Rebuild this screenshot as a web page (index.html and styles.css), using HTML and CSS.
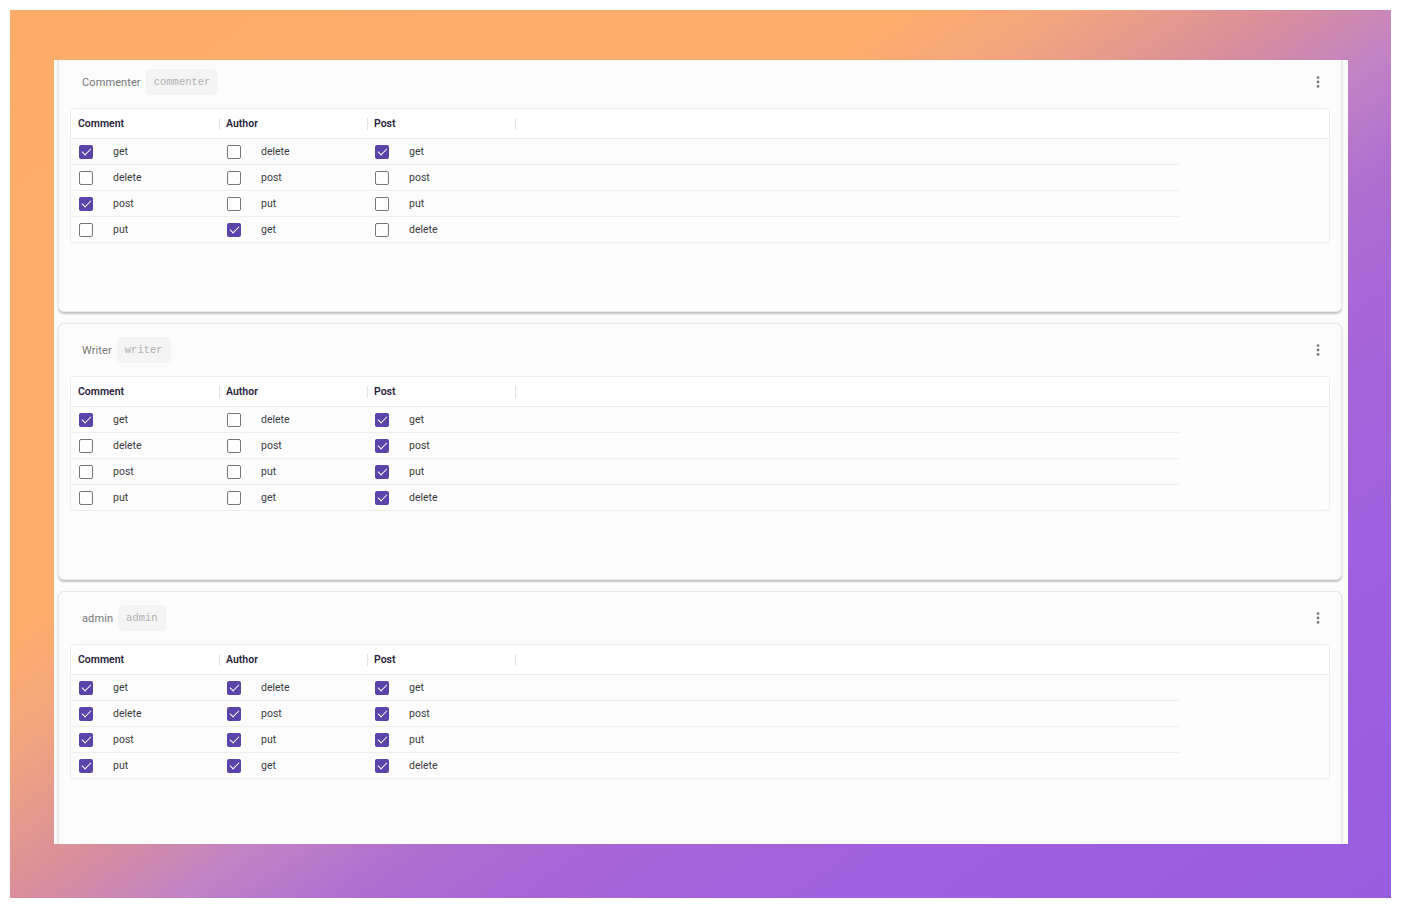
FILE: index.html
```html
<!DOCTYPE html>
<html lang="en">
<head>
<meta charset="utf-8">
<title>Roles</title>
<link rel="stylesheet" href="styles.css">
</head>
<body>
<div class="frame">
  <div class="window">
    <div class="list">

      <section class="card">
        <header class="card-head">
          <span class="role-name">Commenter</span>
          <code class="role-key">commenter</code>
          <button class="more" aria-label="More"><svg width="4" height="12" viewBox="0 0 4 12"><circle cx="2" cy="1.6" r="1.4"/><circle cx="2" cy="6" r="1.4"/><circle cx="2" cy="10.4" r="1.4"/></svg></button>
        </header>
        <div class="perm-table">
          <div class="perm-head"><div class="th">Comment</div><div class="th">Author</div><div class="th">Post</div></div>
          <div class="perm-row">
            <label class="cell"><span class="cb on"></span>get</label>
            <label class="cell"><span class="cb"></span>delete</label>
            <label class="cell"><span class="cb on"></span>get</label>
          </div>
          <div class="perm-row">
            <label class="cell"><span class="cb"></span>delete</label>
            <label class="cell"><span class="cb"></span>post</label>
            <label class="cell"><span class="cb"></span>post</label>
          </div>
          <div class="perm-row">
            <label class="cell"><span class="cb on"></span>post</label>
            <label class="cell"><span class="cb"></span>put</label>
            <label class="cell"><span class="cb"></span>put</label>
          </div>
          <div class="perm-row">
            <label class="cell"><span class="cb"></span>put</label>
            <label class="cell"><span class="cb on"></span>get</label>
            <label class="cell"><span class="cb"></span>delete</label>
          </div>
        </div>
      </section>

      <section class="card">
        <header class="card-head">
          <span class="role-name">Writer</span>
          <code class="role-key">writer</code>
          <button class="more" aria-label="More"><svg width="4" height="12" viewBox="0 0 4 12"><circle cx="2" cy="1.6" r="1.4"/><circle cx="2" cy="6" r="1.4"/><circle cx="2" cy="10.4" r="1.4"/></svg></button>
        </header>
        <div class="perm-table">
          <div class="perm-head"><div class="th">Comment</div><div class="th">Author</div><div class="th">Post</div></div>
          <div class="perm-row">
            <label class="cell"><span class="cb on"></span>get</label>
            <label class="cell"><span class="cb"></span>delete</label>
            <label class="cell"><span class="cb on"></span>get</label>
          </div>
          <div class="perm-row">
            <label class="cell"><span class="cb"></span>delete</label>
            <label class="cell"><span class="cb"></span>post</label>
            <label class="cell"><span class="cb on"></span>post</label>
          </div>
          <div class="perm-row">
            <label class="cell"><span class="cb"></span>post</label>
            <label class="cell"><span class="cb"></span>put</label>
            <label class="cell"><span class="cb on"></span>put</label>
          </div>
          <div class="perm-row">
            <label class="cell"><span class="cb"></span>put</label>
            <label class="cell"><span class="cb"></span>get</label>
            <label class="cell"><span class="cb on"></span>delete</label>
          </div>
        </div>
      </section>

      <section class="card">
        <header class="card-head">
          <span class="role-name">admin</span>
          <code class="role-key">admin</code>
          <button class="more" aria-label="More"><svg width="4" height="12" viewBox="0 0 4 12"><circle cx="2" cy="1.6" r="1.4"/><circle cx="2" cy="6" r="1.4"/><circle cx="2" cy="10.4" r="1.4"/></svg></button>
        </header>
        <div class="perm-table">
          <div class="perm-head"><div class="th">Comment</div><div class="th">Author</div><div class="th">Post</div></div>
          <div class="perm-row">
            <label class="cell"><span class="cb on"></span>get</label>
            <label class="cell"><span class="cb on"></span>delete</label>
            <label class="cell"><span class="cb on"></span>get</label>
          </div>
          <div class="perm-row">
            <label class="cell"><span class="cb on"></span>delete</label>
            <label class="cell"><span class="cb on"></span>post</label>
            <label class="cell"><span class="cb on"></span>post</label>
          </div>
          <div class="perm-row">
            <label class="cell"><span class="cb on"></span>post</label>
            <label class="cell"><span class="cb on"></span>put</label>
            <label class="cell"><span class="cb on"></span>put</label>
          </div>
          <div class="perm-row">
            <label class="cell"><span class="cb on"></span>put</label>
            <label class="cell"><span class="cb on"></span>get</label>
            <label class="cell"><span class="cb on"></span>delete</label>
          </div>
        </div>
      </section>

    </div>
  </div>
</div>
</body>
</html>
```

FILE: styles.css
```css
* { box-sizing: border-box; }

html, body {
  margin: 0;
  padding: 0;
  background: #ffffff;
}

body {
  padding: 10px;
  width: 1401px;
  height: 918px;
  font-family: Roboto, Inter, "Noto Sans", sans-serif;
}

.frame {
  width: 1381px;
  height: 888px;
  padding: 50px 43px 54px 44px;
  background: linear-gradient(145deg, #fdab69 0%, #fdac6c 34%, #f3a47f 40%, #d98e9a 48%, #c383c4 54%, #b070d0 60%, #a865d8 67%, #9e60e0 82%, #985ce0 100%);
}

.window {
  width: 1294px;
  height: 784px;
  background: #fcfcfc;
  overflow: hidden;
  padding: 0 6px 0 4px;
}

.list {
  margin-top: -5px;
  display: flex;
  flex-direction: column;
  gap: 11px;
}

.card {
  background: #fcfcfc;
  border: 1px solid #e9e9e9;
  border-radius: 6px;
  box-shadow: 0 1.5px 2px rgba(0, 0, 0, 0.22);
  padding: 0 11px 68px 11px;
}

.card-head {
  height: 52px;
  display: flex;
  align-items: center;
  padding: 0 0 0 12px;
}

.role-name {
  font-size: 11px;
  color: #777777;
  letter-spacing: 0.1px;
}

.role-key {
  margin-left: 5px;
  font-family: "Liberation Mono", monospace;
  font-size: 10.5px;
  color: #b0b0b0;
  background: #f4f4f4;
  border-radius: 4px;
  padding: 7px 8px;
  line-height: 12px;
}

.more {
  margin-left: auto;
  margin-right: 10px;
  border: 0;
  background: transparent;
  padding: 0;
  width: 4px;
  height: 12px;
  display: flex;
}

.more svg { fill: #7b7b7b; }

.perm-table {
  border: 1px solid #ececec;
  border-radius: 4px;
  background: #fcfcfc;
  overflow: hidden;
}

.perm-head {
  height: 30px;
  background: #ffffff;
  border-bottom: 1px solid #ececec;
  display: grid;
  grid-template-columns: repeat(3, 148px);
  align-items: center;
}

.th {
  position: relative;
  padding-left: 7px;
  font-size: 10.5px;
  font-weight: 600;
  color: #28223d;
}

.th::after {
  content: "";
  position: absolute;
  right: -1px;
  top: 50%;
  width: 1px;
  height: 12px;
  margin-top: -6px;
  background: #e2e2e2;
}

.perm-row {
  width: 1108px;
  height: 26px;
  display: grid;
  grid-template-columns: repeat(3, 148px);
  align-items: center;
  border-bottom: 1px solid #eeeeee;
}

.perm-row:last-child {
  border-bottom: 0;
  height: 25px;
}

.cell {
  display: flex;
  align-items: center;
  padding-left: 8px;
  font-size: 10.5px;
  color: #3a3a44;
}

.cb {
  width: 14px;
  height: 14px;
  margin-right: 20px;
  border: 1.6px solid #767676;
  border-radius: 2px;
  background: #ffffff;
  position: relative;
  flex: none;
}

.cb.on {
  border: 0;
  background: #5a44a9;
}

.cb.on::after {
  content: "";
  position: absolute;
  left: 4.5px;
  top: 1.5px;
  width: 4px;
  height: 8px;
  border: solid #ffffff;
  border-width: 0 1.8px 1.8px 0;
  transform: rotate(45deg);
}
```
